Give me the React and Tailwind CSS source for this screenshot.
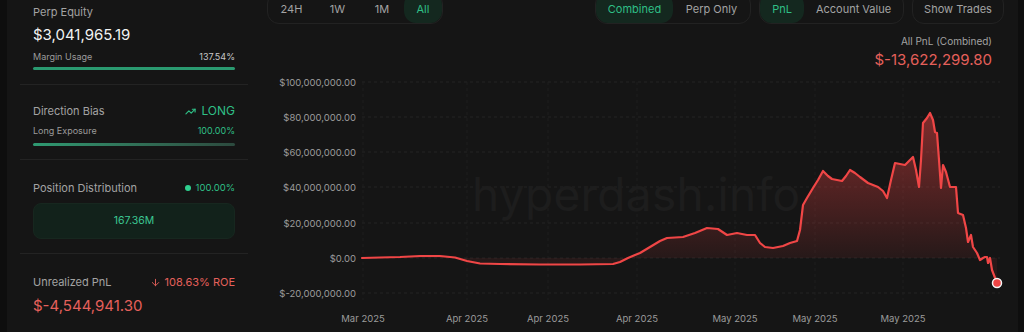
import React from 'react';
import { TrendingUp, ArrowDown } from 'lucide-react';

const FONT = { fontFamily: 'Inter, "Liberation Sans", sans-serif' };

const linePts = [
  [362, 258], [380, 257.5], [400, 257], [420, 256], [440, 256], [455, 257.5], [467, 261], [480, 263.5],
  [500, 264], [540, 264.5], [580, 264.5], [613, 264], [620, 262], [628, 258], [635, 255], [640, 253],
  [650, 247], [660, 241], [667, 238], [683, 237], [695, 233], [707, 228], [718, 229], [727, 235],
  [737, 233], [747, 235], [755, 235], [760, 243], [765, 247], [773, 248], [783, 246], [790, 243],
  [797, 241], [800, 230], [803, 205], [807, 198], [813, 188], [818, 180], [823, 171], [828, 176],
  [832, 179], [842, 181], [846, 176], [850, 170], [855, 173], [860, 177], [868, 183], [878, 187],
  [883, 191], [887, 198], [891, 180], [895, 163], [905, 165], [910, 160], [913, 157], [916, 170],
  [919, 187], [921, 160], [923, 123], [927, 118], [930, 113], [933, 120], [935, 132], [937, 133],
  [939, 160], [941, 188], [943, 165], [946, 172], [950, 187], [956, 187], [958, 213], [963, 215],
  [966, 228], [968, 242], [971, 235], [973, 247], [977, 253], [980, 260], [983, 258], [985, 257],
  [987, 257], [988, 263], [990, 258], [992, 270], [997, 283],
];

const yTicks = [
  ['$100,000,000.00', 82],
  ['$80,000,000.00', 117],
  ['$60,000,000.00', 152],
  ['$40,000,000.00', 187],
  ['$20,000,000.00', 223],
  ['$0.00', 258],
  ['$-20,000,000.00', 293],
];

const xTicks = [
  ['Mar 2025', 363],
  ['Apr 2025', 467],
  ['Apr 2025', 548],
  ['Apr 2025', 637],
  ['May 2025', 735],
  ['May 2025', 815],
  ['May 2025', 903],
];

const Seg = ({ items, active, className = '' }) => (
  <div className={`flex items-stretch h-[32px] rounded-xl border border-[#222222] ${className}`}>
    {items.map(([label, w]) => (
      <div
        key={label}
        style={{ width: w }}
        className={`flex items-center justify-center pt-[16px] text-[11px] leading-none rounded-xl ${
          label === active ? 'bg-[#14281f] text-[#2fbf86]' : 'text-[#a3a3a3]'
        }`}
      >
        <span className="-translate-y-[7px]">{label}</span>
      </div>
    ))}
  </div>
);

const PnlChart = () => {
  const line = linePts.map((p) => p.join(',')).join(' ');
  const area = `${line} 997,258 362,258`;
  return (
    <svg width="763" height="262" viewBox="255 70 763 262" className="block">
      <defs>
        <linearGradient id="pnlFill" x1="0" y1="110" x2="0" y2="258" gradientUnits="userSpaceOnUse">
          <stop offset="0" stopColor="#ef4444" stopOpacity="0.5" />
          <stop offset="1" stopColor="#ef4444" stopOpacity="0.08" />
        </linearGradient>
      </defs>

      {/* grid */}
      {yTicks.map(([, y]) => (
        <line key={y} x1="362" x2="1000" y1={y} y2={y} stroke="#242424" strokeDasharray="3 3" />
      ))}
      {xTicks.map(([, x], i) => (
        <line key={i} x1={x} x2={x} y1="82" y2="300" stroke="#1f1f1f" strokeDasharray="3 3" />
      ))}

      {/* watermark */}
      <text x="472" y="211" fontSize="46" fill="#1d1d1d" textLength="328" style={FONT}>
        hyperdash.info
      </text>

      {yTicks.map(([label, y]) => (
        <text key={label} x="356" y={y + 3.5} fontSize="9.5" fill="#9b9b9b" textAnchor="end" style={FONT}>
          {label}
        </text>
      ))}
      {xTicks.map(([label, x], i) => (
        <text key={i} x={x} y="322" fontSize="9.5" fill="#9b9b9b" textAnchor="middle" style={FONT}>
          {label}
        </text>
      ))}

      <polygon points={area} fill="url(#pnlFill)" />
      <polyline points={line} fill="none" stroke="#f04646" strokeWidth="2.2" strokeLinejoin="round" strokeLinecap="round" />
      <circle cx="997" cy="283" r="4.5" fill="#ef4444" stroke="#f5f5f5" strokeWidth="1.5" />
    </svg>
  );
};

export default function App() {
  return (
    <div className="flex h-[332px] w-[1024px] overflow-hidden bg-[#0e0e0e]" style={FONT}>
      <div className="w-[7px] shrink-0" />

      {/* left stats column */}
      <div className="w-[248px] shrink-0 bg-[#151515] pl-[13px] pr-[7px] flex flex-col">
        <div className="border-b border-[#232323] px-[13px] pt-[5px] pb-[14px]">
          <div className="text-[11px] leading-[14px] text-[#a3a3a3]">Perp Equity</div>
          <div className="mt-[6px] text-[15px] leading-[20px] text-[#f2f2f2]">$3,041,965.19</div>
          <div className="mt-[6px] flex justify-between text-[9px] leading-[12px]">
            <span className="text-[#9b9b9b]">Margin Usage</span>
            <span className="text-[#c8c8c8]">137.54%</span>
          </div>
          <div className="mt-[4px] h-[3px] rounded-full bg-[#2a9a70]" />
        </div>

        <div className="border-b border-[#232323] px-[13px] pt-[19px] pb-[13px]">
          <div className="flex items-center justify-between text-[11px] leading-[14px]">
            <span className="text-[#a3a3a3]">Direction Bias</span>
            <span className="flex items-center gap-[5px] text-[#2fbf86] text-[12px]">
              <TrendingUp size={11} strokeWidth={2.5} />
              LONG
            </span>
          </div>
          <div className="mt-[7px] flex justify-between text-[9px] leading-[12px]">
            <span className="text-[#9b9b9b]">Long Exposure</span>
            <span className="text-[#2fbf86]">100.00%</span>
          </div>
          <div className="mt-[6px] h-[3px] rounded-full bg-gradient-to-r from-[#2e9a72] to-[#2c4a3e]" />
        </div>

        <div className="border-b border-[#232323] px-[13px] pt-[21px] pb-[14px]">
          <div className="flex items-center justify-between text-[11px] leading-[14px]">
            <span className="text-[#a3a3a3]">Position Distribution</span>
            <span className="flex items-center gap-[5px] text-[9.5px] text-[#2fbf86]">
              <span className="w-[6px] h-[6px] rounded-full bg-[#2fd08f]" />
              100.00%
            </span>
          </div>
          <div className="mt-[8px] h-[36px] rounded-lg bg-[#12221b] border border-[#17271f] flex items-center justify-center text-[10.5px] text-[#3cc893]">
            167.36M
          </div>
        </div>

        <div className="px-[13px] pt-[21px]">
          <div className="flex items-center justify-between text-[11px] leading-[14px]">
            <span className="text-[#a3a3a3]">Unrealized PnL</span>
            <span className="flex items-center gap-[4px] text-[#e5605b] text-[11px]">
              <ArrowDown size={11} strokeWidth={2} />
              108.63% ROE
            </span>
          </div>
          <div className="mt-[7px] text-[15px] leading-[20px] text-[#e5605b]">$-4,544,941.30</div>
        </div>
      </div>

      {/* chart column */}
      <div className="w-[763px] shrink-0 bg-[#151515] flex flex-col">
        <div className="flex items-start justify-between pl-[12px] pr-[14px] -mt-[8px]">
          <Seg items={[['24H', 47], ['1W', 45], ['1M', 44], ['All', 38]]} active="All" />
          <div className="flex gap-[8px]">
            <Seg items={[['Combined', 77], ['Perp Only', 77]]} active="Combined" />
            <Seg items={[['PnL', 44], ['Account Value', 99]]} active="PnL" />
            <Seg items={[['Show Trades', 90]]} active="" />
          </div>
        </div>
        <div className="flex flex-col items-end pr-[26px] mt-[11px]">
          <div className="text-[10px] leading-[13px] text-[#a3a3a3]">All PnL (Combined)</div>
          <div className="mt-[2px] text-[15px] leading-[20px] text-[#e5605b]">$-13,622,299.80</div>
        </div>
        <PnlChart />
      </div>

      <div className="flex-1" />
    </div>
  );
}
